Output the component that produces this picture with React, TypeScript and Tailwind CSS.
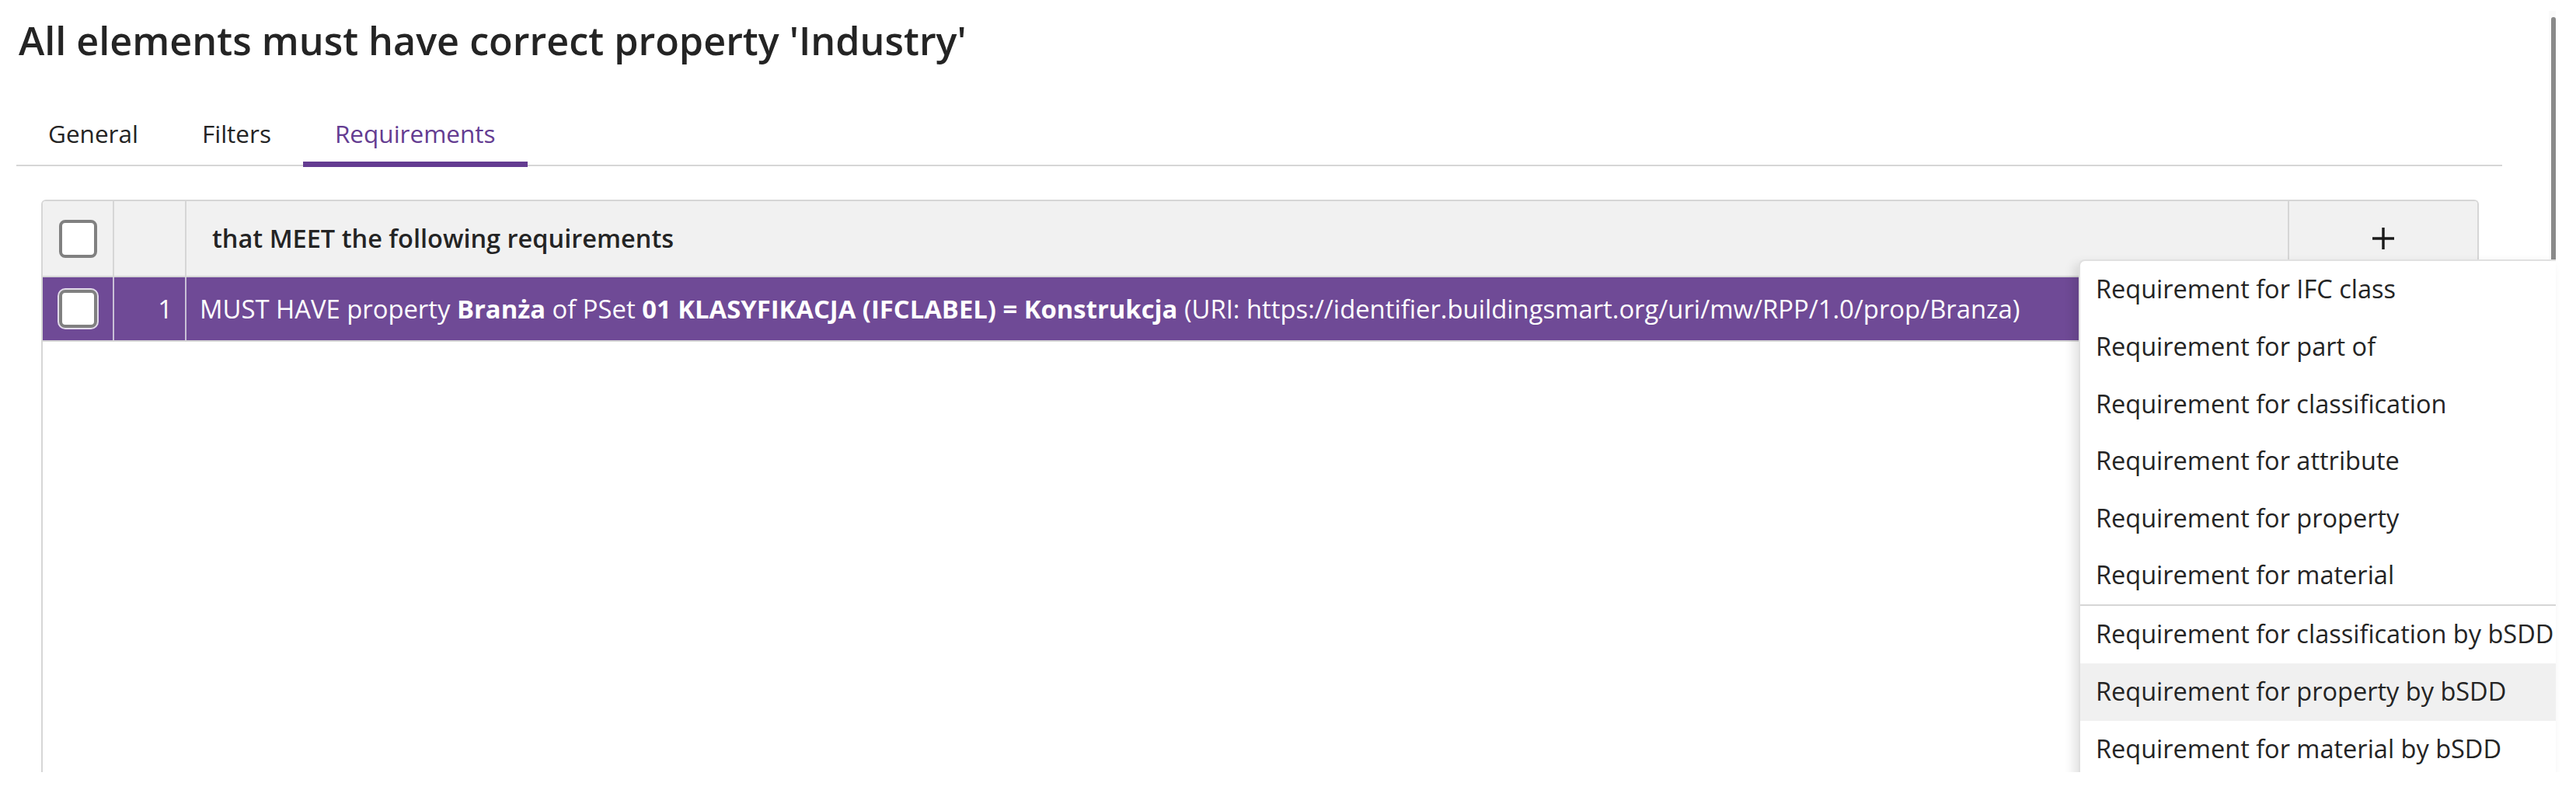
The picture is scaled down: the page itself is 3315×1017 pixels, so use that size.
const menuItems = [
  'Requirement for IFC class',
  'Requirement for part of',
  'Requirement for classification',
  'Requirement for attribute',
  'Requirement for property',
  'Requirement for material',
]

const bsddItems = [
  'Requirement for classification by bSDD',
  'Requirement for property by bSDD',
  'Requirement for material by bSDD',
]

function Checkbox({ onPurple }: { onPurple?: boolean }) {
  return (
    <div
      className={
        'w-[49px] h-[49px] rounded-[8px] border-[4px] border-[#808080] bg-white ' +
        (onPurple ? 'ring-2 ring-white/80' : '')
      }
    />
  )
}

export default function App() {
  return (
    <div className="w-full h-[1017px] bg-white overflow-hidden text-[#242424] font-['Open_Sans',sans-serif]">
      <div className="relative h-[994px] overflow-hidden">
        {/* Title */}
        <h1 className="pl-[24px] pt-[20px] text-[50.3px] leading-[64px] font-semibold">
          All elements must have correct property 'Industry'
        </h1>

        {/* Tabs */}
        <div className="mt-[68px] ml-[21px] w-[3199px] flex border-b-2 border-[#d6d6d6] text-[31.5px] leading-[40px]">
          <div className="px-[41px] pb-[20px]">General</div>
          <div className="px-[41px] pb-[20px]">Filters</div>
          <div className="relative px-[41px] pb-[20px] text-[#643c91]">
            Requirements
            <span className="absolute left-0 right-0 -bottom-[3px] h-[7px] bg-[#643c91]" />
          </div>
        </div>

        {/* Requirements table */}
        <div className="mt-[43px] ml-[53px] w-[3137px] h-[760px] border-x-2 border-t-2 border-[#d6d6d6] rounded-t-[6px] overflow-hidden">
          <div className="flex h-[98px] bg-[#f1f1f1] border-b-2 border-[#d6d6d6] text-[32.5px]">
            <div className="w-[92px] flex items-center justify-center border-r-2 border-[#d6d6d6]">
              <Checkbox />
            </div>
            <div className="w-[93px] border-r-2 border-[#d6d6d6]" />
            <div className="flex-1 flex items-center pl-[33px] font-semibold">that MEET the following requirements</div>
            <div className="w-[244px] flex items-center justify-center border-l-2 border-[#d6d6d6]">
              <svg width="30" height="30" viewBox="0 0 30 30">
                <path d="M15 1v28M1 15h28" stroke="#1a1a1a" strokeWidth="3.4" />
              </svg>
            </div>
          </div>
          <div className="flex h-[83px] bg-[#6f4a96] border-b-2 border-[#d6d6d6] text-white text-[32.8px]">
            <div className="w-[92px] flex items-center justify-center border-r-2 border-[#c9c0d6]">
              <Checkbox onPurple />
            </div>
            <div className="w-[93px] flex items-center justify-end pr-[16px] border-r-2 border-[#c9c0d6]">1</div>
            <div className="flex-1 flex items-center pl-[17px] whitespace-nowrap">
              MUST HAVE property&nbsp;<b>Branża</b>&nbsp;of PSet&nbsp;<b>01 KLASYFIKACJA (IFCLABEL) = Konstrukcja</b>
              &nbsp;(URI: https://identifier.buildingsmart.org/uri/mw/RPP/1.0/prop/Branza)
            </div>
          </div>
        </div>

        {/* Scrollbar */}
        <div className="absolute left-[3280px] top-[14px] w-[9px] h-[320px] bg-[#fafafa]">
          <div className="ml-[3px] mt-[8px] w-[6px] h-[312px] bg-[#8a8a8a] rounded-t-[3px]" />
        </div>

        {/* Add requirement menu */}
        <div className="absolute left-[2675px] top-[334px] w-[614px] bg-white border-t-2 border-l-2 border-[#e0e0e0] rounded-tl-[8px] shadow-[-6px_6px_14px_rgba(0,0,0,0.12)] text-[32.5px]">
          {menuItems.map((label) => (
            <div key={label} className="h-[73.6px] flex items-center pl-[20px] whitespace-nowrap">
              {label}
            </div>
          ))}
          <div className="h-[2px] bg-[#d6d6d6]" />
          {bsddItems.map((label, i) => (
            <div
              key={label}
              className={'h-[74px] flex items-center pl-[20px] whitespace-nowrap ' + (i === 1 ? 'bg-[#f0f0f0]' : '')}
            >
              {label}
            </div>
          ))}
        </div>
      </div>
    </div>
  )
}
